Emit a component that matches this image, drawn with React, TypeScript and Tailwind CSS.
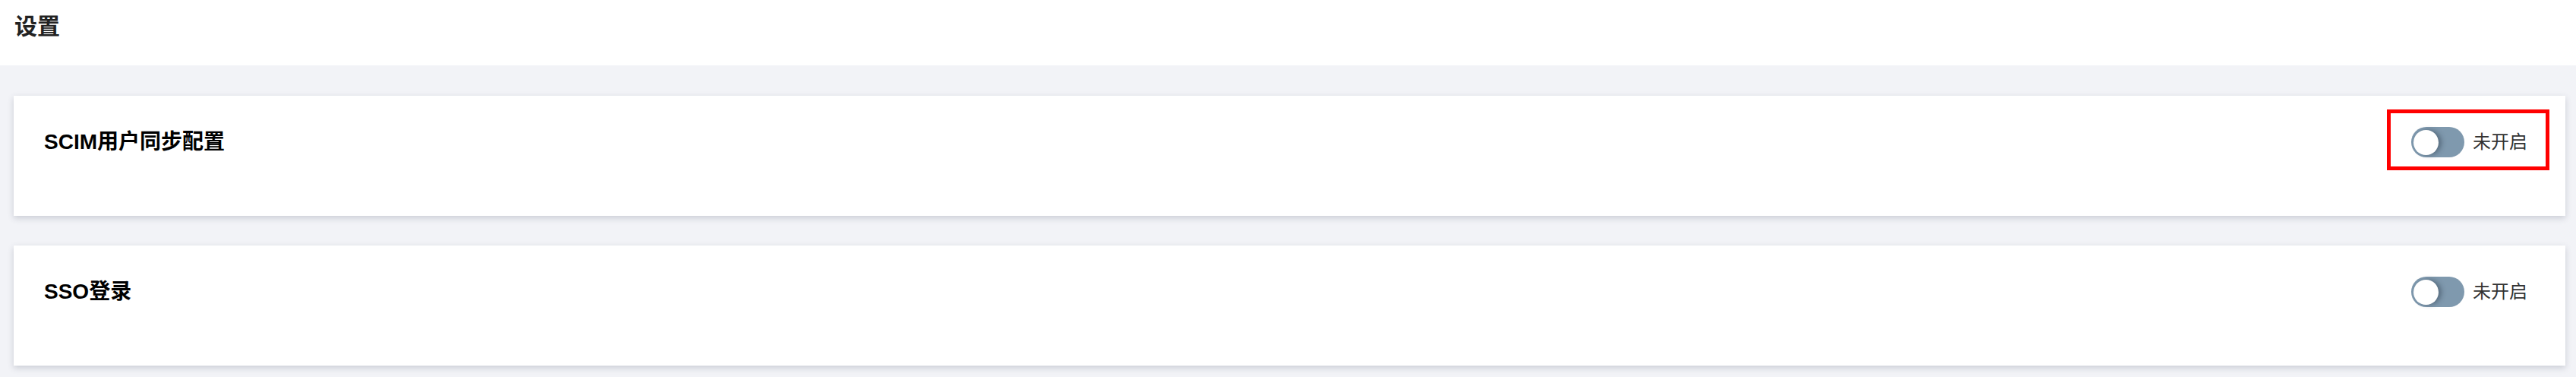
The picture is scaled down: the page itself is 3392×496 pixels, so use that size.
import React from 'react';

const font = { fontFamily: '"Liberation Sans", "Noto Sans CJK SC", sans-serif' };

const Toggle: React.FC = () => (
  <div className="relative w-[70px] h-[40px] rounded-full bg-[#7f99ae] shrink-0">
    <div className="absolute left-[3px] top-[4px] w-[33px] h-[33px] rounded-full bg-white shadow-[4px_0_6px_rgba(40,55,70,0.45)]" />
  </div>
);

interface CardProps {
  title: string;
  highlighted?: boolean;
}

const SettingCard: React.FC<CardProps> = ({ title, highlighted }) => (
  <div className="h-[158px] bg-white shadow-[0_3px_8px_rgba(60,70,90,0.22)] pl-[40px] pr-[50px] pt-[41px]">
    <div className="flex items-center justify-between h-[40px]">
      <span className="text-[28px] font-bold text-black leading-[40px]">{title}</span>
      <div className="relative flex items-center gap-[11px]">
        <Toggle />
        <span className="text-[24px] text-[#333] leading-[40px]">未开启</span>
        {highlighted && (
          <div className="absolute left-[-32px] right-[-29px] top-[-23px] bottom-[-17px] border-[5px] border-[#ff0000] pointer-events-none" />
        )}
      </div>
    </div>
  </div>
);

export default function App() {
  return (
    <div className="w-[3392px] h-[496px] bg-[#f2f3f7] overflow-hidden" style={font}>
      <div className="h-[86px] bg-white pl-[19px] pt-[15px]">
        <h1 className="text-[30px] font-bold text-[#222] leading-[40px]">设置</h1>
      </div>
      <div className="pt-[40px] pl-[18px] pr-[14px] flex flex-col gap-[39px]">
        <SettingCard title="SCIM用户同步配置" highlighted />
        <SettingCard title="SSO登录" />
      </div>
    </div>
  );
}
